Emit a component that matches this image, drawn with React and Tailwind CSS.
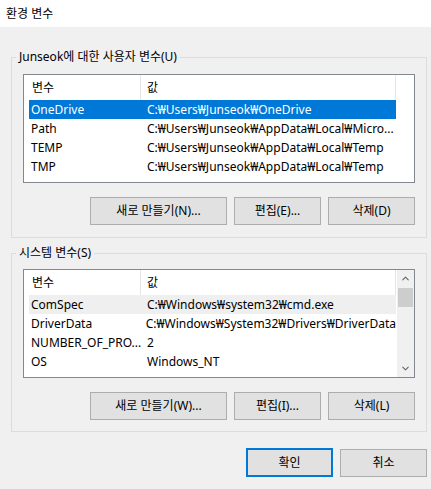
import { ChevronUp, ChevronDown } from 'lucide-react'

const userVars = [
  { name: 'OneDrive', value: 'C:₩Users₩Junseok₩OneDrive', selected: true },
  { name: 'Path', value: 'C:₩Users₩Junseok₩AppData₩Local₩Micro...' },
  { name: 'TEMP', value: 'C:₩Users₩Junseok₩AppData₩Local₩Temp' },
  { name: 'TMP', value: 'C:₩Users₩Junseok₩AppData₩Local₩Temp' }
]

const systemVars = [
  { name: 'ComSpec', value: 'C:₩Windows₩system32₩cmd.exe', hover: true },
  { name: 'DriverData', value: 'C:₩Windows₩System32₩Drivers₩DriverData' },
  { name: 'NUMBER_OF_PRO...', value: '2' },
  { name: 'OS', value: 'Windows_NT' }
]

function Header() {
  return (
    <div className="flex h-[25px] shrink-0">
      <div className="w-[117px] pl-[8px] flex items-center border-r border-[#e5e5e5]">변수</div>
      <div className="w-[255px] pl-[6px] flex items-center border-r border-[#e5e5e5]">값</div>
    </div>
  )
}

function Row({ item }) {
  const bg = item.selected ? 'bg-[#0078d7] text-white' : item.hover ? 'bg-[#efefef]' : ''
  return (
    <div className={`ml-[5px] w-[367px] h-[19px] shrink-0 flex items-center whitespace-nowrap ${bg}`}>
      <div className="w-[111px] pl-[2px]">{item.name}</div>
      <div className="pl-[7px]">{item.value}</div>
    </div>
  )
}

function Button({ children, className = '' }) {
  return (
    <button className={`h-[28px] bg-[#e1e1e1] border border-[#adadad] flex items-center justify-center ${className}`}>
      {children}
    </button>
  )
}

function GroupBox({ title, children }) {
  return (
    <fieldset className="border border-[#dcdcdc] min-w-0">
      <legend className="ml-[4px] px-[3px] leading-[16px]">{title}</legend>
      <div className="px-[11px]">{children}</div>
    </fieldset>
  )
}

export default function App() {
  return (
    <div className="w-[431px] h-[489px] bg-[#f0f0f0] flex flex-col text-[12px] leading-[16px] text-black font-['Noto_Sans','Noto_Sans_CJK_KR',sans-serif]">
      {/* 제목 표시줄 */}
      <div className="h-[27px] bg-white flex items-center pl-[6px] shrink-0">환경 변수</div>

      <div className="pl-[11px] pr-[4px] pt-[22px] flex flex-col">
        {/* 사용자 변수 */}
        <GroupBox title="Junseok에 대한 사용자 변수(U)">
          <div className="mt-[9px] h-[109px] border border-[#828790] bg-white flex flex-col overflow-hidden">
            <Header />
            {userVars.map(v => <Row key={v.name} item={v} />)}
          </div>
          <div className="mt-[14px] mb-[12px] flex justify-end gap-[7px]">
            <Button className="w-[137px]">새로 만들기(N)...</Button>
            <Button className="w-[87px]">편집(E)...</Button>
            <Button className="w-[87px]">삭제(D)</Button>
          </div>
        </GroupBox>

        {/* 시스템 변수 */}
        <div className="mt-[7px]">
          <GroupBox title="시스템 변수(S)">
            <div className="mt-[8px] h-[109px] border border-[#828790] bg-white flex overflow-hidden">
              <div className="flex-1 flex flex-col overflow-hidden">
                <Header />
                {systemVars.map(v => <Row key={v.name} item={v} />)}
              </div>
              <div className="w-[17px] bg-[#f0f0f0] flex flex-col items-center shrink-0">
                <div className="h-[17px] w-full flex items-center justify-center text-[#606060]">
                  <ChevronUp size={11} strokeWidth={2.2} />
                </div>
                <div className="mt-[1px] h-[19px] w-[15px] bg-[#cdcdcd]"></div>
                <div className="flex-1"></div>
                <div className="h-[17px] w-full flex items-center justify-center text-[#606060]">
                  <ChevronDown size={11} strokeWidth={2.2} />
                </div>
              </div>
            </div>
            <div className="mt-[14px] mb-[11px] flex justify-end gap-[7px]">
              <Button className="w-[137px]">새로 만들기(W)...</Button>
              <Button className="w-[87px]">편집(I)...</Button>
              <Button className="w-[87px]">삭제(L)</Button>
            </div>
          </GroupBox>
        </div>

        {/* 확인 / 취소 */}
        <div className="mt-[16px] flex justify-end gap-[7px]">
          <button className="w-[87px] h-[29px] bg-[#e1e1e1] border-2 border-[#0078d7] flex items-center justify-center">확인</button>
          <Button className="w-[87px] mt-[1px]">취소</Button>
        </div>
      </div>
    </div>
  )
}
